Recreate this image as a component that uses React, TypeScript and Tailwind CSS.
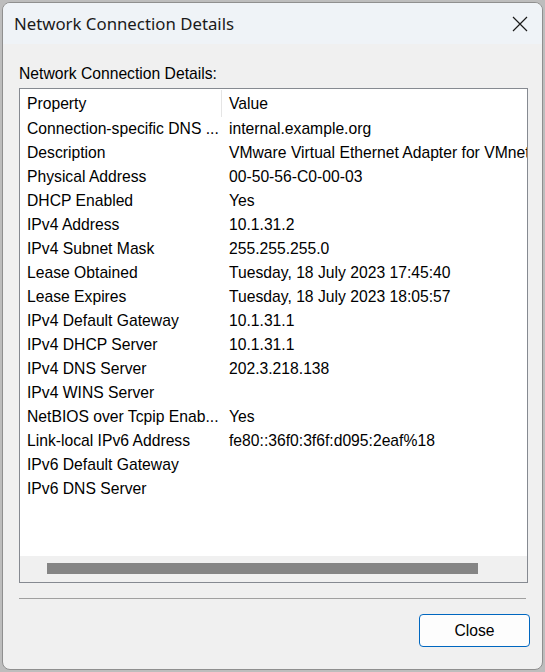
import React from "react";

const rows: [string, string][] = [
    ["Connection-specific DNS ...", "internal.example.org"],
    ["Description", "VMware Virtual Ethernet Adapter for VMnet1"],
    ["Physical Address", "00-50-56-C0-00-03"],
    ["DHCP Enabled", "Yes"],
    ["IPv4 Address", "10.1.31.2"],
    ["IPv4 Subnet Mask", "255.255.255.0"],
    ["Lease Obtained", "Tuesday, 18 July 2023 17:45:40"],
    ["Lease Expires", "Tuesday, 18 July 2023 18:05:57"],
    ["IPv4 Default Gateway", "10.1.31.1"],
    ["IPv4 DHCP Server", "10.1.31.1"],
    ["IPv4 DNS Server", "202.3.218.138"],
    ["IPv4 WINS Server", ""],
    ["NetBIOS over Tcpip Enab...", "Yes"],
    ["Link-local IPv6 Address", "fe80::36f0:3f6f:d095:2eaf%18"],
    ["IPv6 Default Gateway", ""],
    ["IPv6 DNS Server", ""],
];

export default function App() {
    return (
        <div className="w-[545px] h-[672px] bg-[#bdbdbd] pt-[2px] pl-[2px] overflow-hidden">
            <div className="w-[541px] h-[668px] rounded-[8px] border border-[#8f8f8f] bg-[#f0f0f0] overflow-hidden flex flex-col text-black font-['Liberation_Sans',Arial,sans-serif] text-[15.7px]">
                {/* title bar */}
                <div className="h-[41px] shrink-0 bg-[#eff3f7] flex items-center justify-between pl-[11px] pr-[14px]">
                    <span className="font-['Noto_Sans',sans-serif] text-[16.8px] text-[#1a1a1a]">Network Connection Details</span>
                    <svg width="16" height="16" viewBox="0 0 16 16" className="mt-[1px]">
                        <path d="M1 1 L15 15 M15 1 L1 15" stroke="#1a1a1a" strokeWidth="1.2" fill="none" />
                    </svg>
                </div>

                <div className="flex flex-col pl-[16px] flex-1">
                    <div className="mt-[20px] h-[20px] leading-[20px]">Network Connection Details:</div>

                    <div className="mt-[4px] w-[509px] h-[495px] border border-[#868a91] bg-white flex flex-col overflow-hidden">
                        <div className="h-[27px] shrink-0 flex items-center">
                            <div className="w-[202px] pl-[7px] pt-[2px] h-full flex items-center border-r border-[#e5e5e5] mt-[1px]">Property</div>
                            <div className="pl-[7px] pt-[2px]">Value</div>
                        </div>
                        {rows.map(([k, v]) => (
                            <div key={k} className="h-[24px] shrink-0 flex items-center pt-[2px] whitespace-nowrap">
                                <div className="w-[203px] pl-[7px] shrink-0 overflow-hidden">{k}</div>
                                <div className="pl-[6px]">{v}</div>
                            </div>
                        ))}
                        <div className="flex-1" />
                        <div className="h-[26px] shrink-0 bg-[#f0f0f0] pt-[7px] pl-[27px]">
                            <div className="w-[431px] h-[11px] bg-[#858585]" />
                        </div>
                    </div>

                    <div className="mt-[15px] w-[507px] h-[1px] bg-[#a0a0a0]" />

                    <div className="mt-[15px] flex justify-end pr-[12px]">
                        <button className="w-[111px] h-[33px] rounded-[4px] border border-[#0067c0] bg-[#fdfdfd] flex items-center justify-center">
                            Close
                        </button>
                    </div>
                </div>
            </div>
        </div>
    );
}
